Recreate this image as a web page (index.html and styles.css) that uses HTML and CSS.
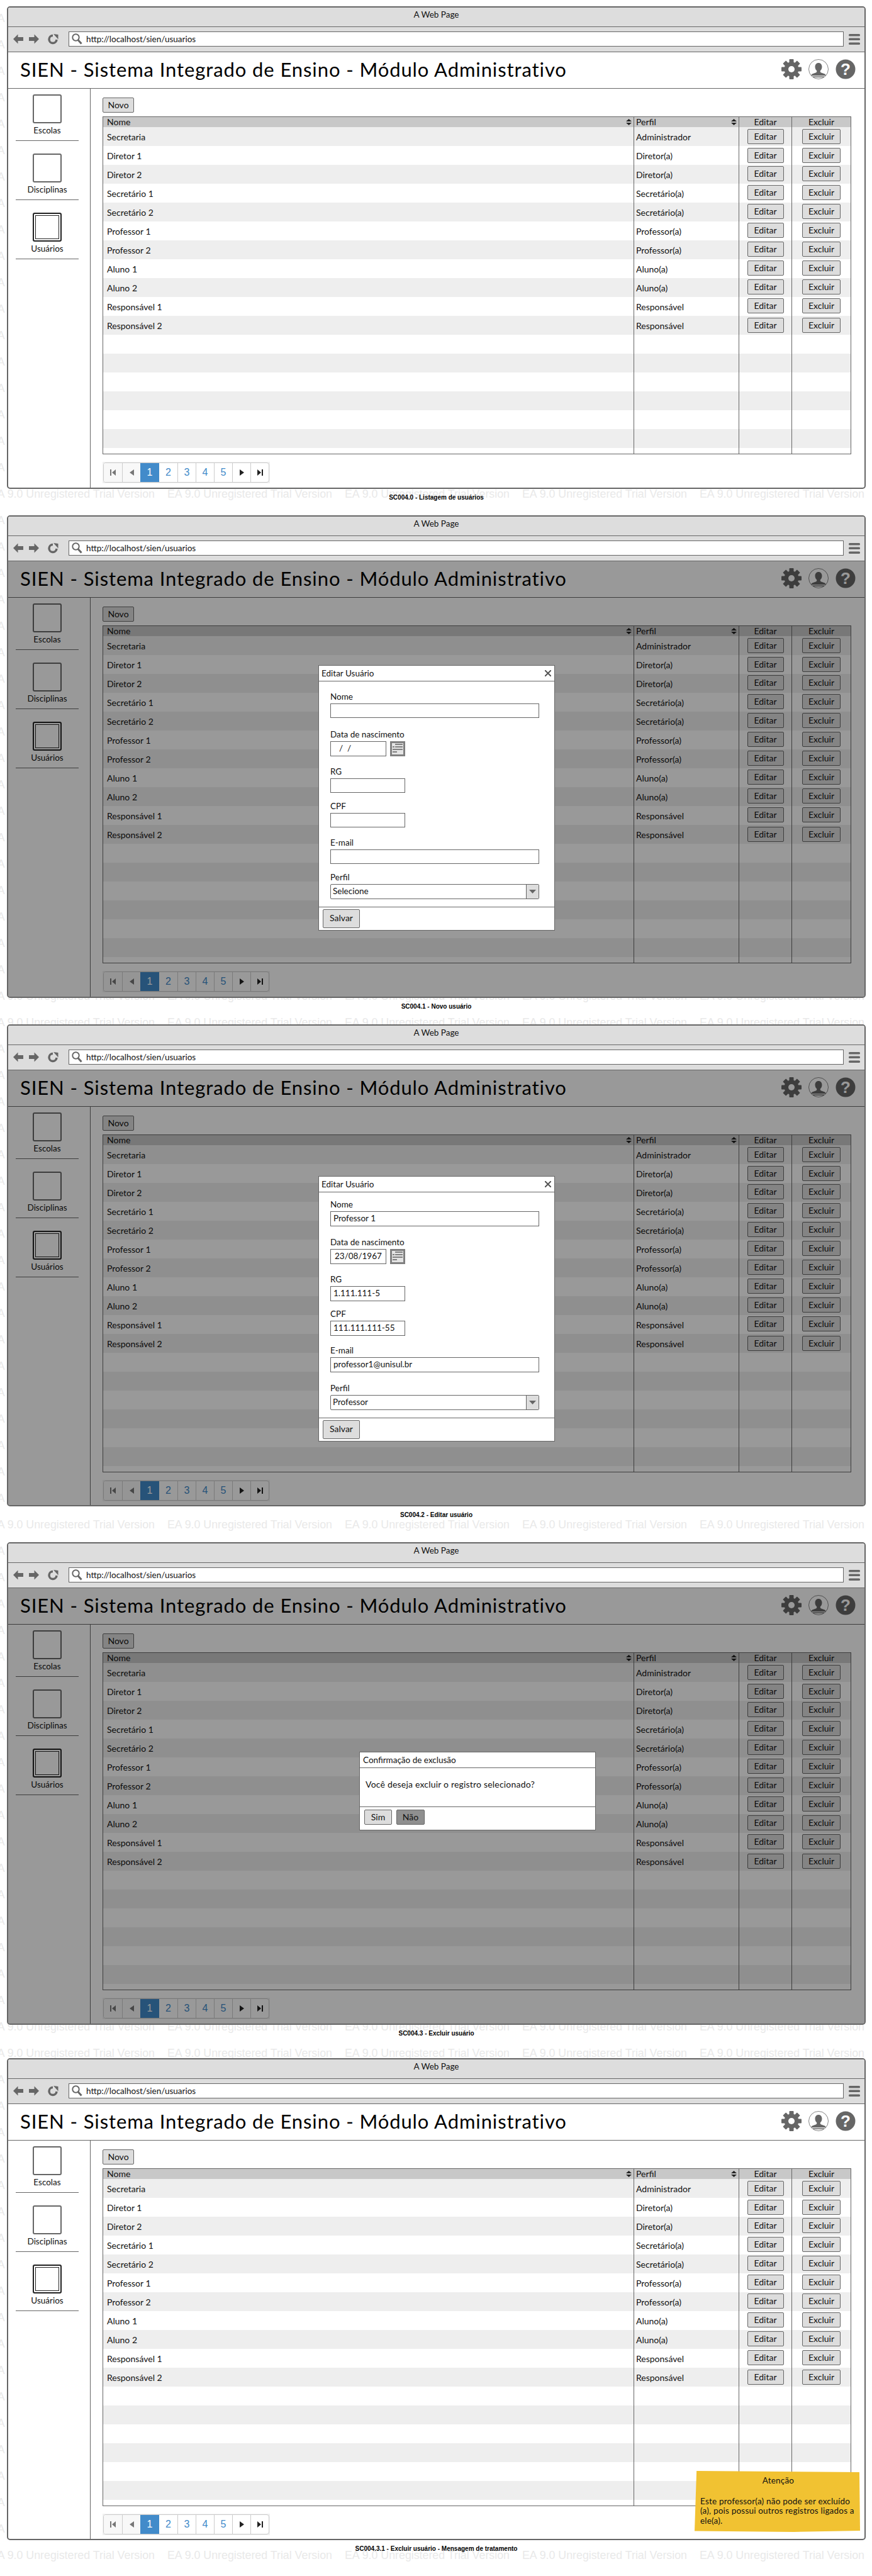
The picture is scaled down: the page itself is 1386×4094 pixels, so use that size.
FILE: index.html
```html
<!DOCTYPE html>
<html lang="pt-BR">
<head>
  <meta charset="UTF-8">
  <title>SIEN - Usuários</title>
  <link rel="stylesheet" href="styles.css">
</head>
<body>
  <div id="marca-dagua" class="marca-dagua"></div>
  <div id="telas" class="telas"></div>
  <script src="script.js"></script>
</body>
</html>
```

FILE: styles.css
```css
html, body {
  margin: 0;
  height: 4094px;
  overflow: hidden;
  background: #fff;
}

body {
  position: relative;
  font-family: "Lato", "Liberation Sans", sans-serif;
  font-size: 14px;
  color: #111;
}

.marca-dagua {
  position: absolute;
  top: 0;
  left: 0;
  width: 1386px;
  height: 4094px;
  overflow: hidden;
  padding-top: 19px;
  box-sizing: border-box;
  font-family: "Liberation Sans", sans-serif;
  font-size: 17.800px;
  line-height: 20px;
  color: #e9e9e9;
}

.marca-linha {
  display: flex;
  height: 42px;
  margin-left: -16px;
}

.marca-linha span {
  flex: 0 0 282px;
  white-space: nowrap;
}

.telas {
  position: relative;
  padding: 10px 0 0 11px;
}

/* janela do navegador */
.janela {
  position: relative;
  box-sizing: border-box;
  width: 1365px;
  height: 767px;
  border: 2px solid #666;
  border-radius: 5px;
  background: #fff;
  display: flex;
  flex-direction: column;
  overflow: hidden;
}

.janela.curta {
  height: 766px;
}

.legenda {
  width: 1365px;
  padding-top: 8px;
  font-family: "Liberation Sans", sans-serif;
  font-size: 10px;
  font-weight: bold;
  line-height: 12px;
  text-align: center;
  color: #000;
}

.gap-42 { height: 34px; }
.gap-57 { height: 49px; }
.gap-53 { height: 45px; }

.barra-titulo {
  box-sizing: border-box;
  height: 31px;
  background: #ddd;
  border-bottom: 1px solid #666;
  text-align: center;
  line-height: 22px;
  font-size: 13.5px;
}

.barra-url {
  box-sizing: border-box;
  height: 40px;
  background: #ddd;
  border-bottom: 1px solid #666;
  display: flex;
  align-items: center;
  padding: 0 7px 1px 8px;
}

.nav-icones {
  display: flex;
  align-items: center;
  width: 88px;
}

.nav-icones svg {
  fill: #666;
  flex: none;
}

.nav-icones .seta { margin-right: 9px; }
.nav-icones .recarregar { margin-left: 5px; }

.campo-url {
  box-sizing: border-box;
  width: 1232px;
  height: 24px;
  background: #fff;
  border: 1px solid #666;
  display: flex;
  align-items: center;
  padding-left: 4px;
  font-size: 13.5px;
}

.campo-url svg {
  margin-right: 6px;
}

.menu-icone {
  margin-left: 8px;
}

.cabecalho {
  box-sizing: border-box;
  height: 58px;
  border-bottom: 1px solid #666;
  display: flex;
  align-items: center;
  padding: 0 14px 3px 19px;
}

.cabecalho h1 {
  flex: 1;
  margin: 0;
  font-size: 31px;
  font-weight: 400;
  letter-spacing: 0.9px;
  color: #000;
}

.cabecalho svg {
  margin-left: 11px;
}

.principal {
  flex: 1;
  display: flex;
}

/* menu lateral */
.lateral {
  box-sizing: border-box;
  width: 131px;
  padding: 9px 0 0 12px;
  border-right: 1px solid #666;
}

.lateral-item {
  box-sizing: border-box;
  width: 100px;
  height: 74px;
  margin-bottom: 20px;
  border-bottom: 1px solid #666;
  text-align: center;
}

.lateral-icone {
  box-sizing: border-box;
  width: 46px;
  height: 46px;
  margin: 0 auto 2px;
  border: 2px solid #666;
  border-radius: 3px;
}

.lateral-item.ativo .lateral-icone {
  border-color: #222;
  box-shadow: inset 0 0 0 2px #fff, inset 0 0 0 3px #222;
}

.lateral-item span {
  line-height: 18px;
  font-size: 13.5px;
}

.conteudo {
  padding: 14px 0 0 19px;
}

.btn {
  box-sizing: border-box;
  display: inline-block;
  height: 24px;
  line-height: 21px;
  background: #ddd;
  border: 1px solid #666;
  border-radius: 2px;
  text-align: center;
  font-size: 14px;
}

.btn-novo {
  display: block;
  width: 50px;
  margin-bottom: 6px;
}

/* tabela */
.tabela {
  box-sizing: border-box;
  width: 1190px;
  table-layout: fixed;
  border-collapse: separate;
  border-spacing: 0;
  border: 1px solid #666;
}

.tabela th, .tabela td {
  padding: 0;
  font-weight: 400;
  text-align: left;
  overflow: hidden;
}

.tabela th + th, .tabela td + td {
  border-left: 1px solid #666;
}

.tabela th {
  height: 16px;
  line-height: 16px;
  background: #c8c8c8;
}

.tabela td {
  height: 30px;
}

.tabela tr.par td {
  background: #eee;
}

.tabela tr.resto td {
  height: 9px;
  background: #fff;
}

.col-nome { width: 843px; }
.col-perfil { width: 167px; }
.col-editar { width: 84px; }

.tabela .nome { padding-left: 6px; }
.tabela .perfil { padding-left: 3px; }

.tabela .centro {
  text-align: center;
}

.tabela td.centro {
  vertical-align: top;
  padding-top: 3px;
  box-sizing: border-box;
}

.tabela tr:nth-child(n+3):nth-child(-n+10) td.centro {
  padding-top: 2px;
}

.ordena {
  float: right;
  margin: 3px 3px 0 0;
  fill: #222;
}

.btn-editar { width: 58px; }
.btn-excluir { width: 61px; }

/* paginacao */
.paginacao {
  display: inline-flex;
  margin: 12px 0 0 0;
  padding: 1px;
  background: #f0f0f0;
  font-family: "Liberation Sans", sans-serif;
}

.paginacao-lista {
  display: flex;
  height: 30px;
  background: #fff;
  border: 1px solid #ccc;
  border-radius: 4px;
  overflow: hidden;
}

.pagina {
  box-sizing: border-box;
  width: 29px;
  display: flex;
  align-items: center;
  justify-content: center;
  font-size: 16px;
  color: #428bca;
  border-left: 1px solid #ccc;
}

.pagina:first-child {
  border-left: 0;
}

.pagina.atual {
  width: 30px;
  border-left: 0;
  background: #428bca;
  color: #fff;
}

.pagina.atual + .pagina {
  border-left: 0;
}

.pagina.inativa {
  background: #f8f8f8;
  fill: #777;
}

.pagina svg {
  fill: inherit;
}

.pagina.seta-ativa {
  fill: #222;
}

/* fundo escuro dos dialogos */
.escurecer {
  position: absolute;
  top: 71px;
  left: 0;
  right: 0;
  bottom: 0;
  background: rgba(0, 0, 0, 0.4);
}

.dialogo {
  position: absolute;
  box-sizing: border-box;
  width: 376px;
  background: #fff;
  border: 1px solid #666;
}

.dialogo-novo { top: 165px; left: 493px; height: 422px; }
.dialogo-editar { top: 168px; left: 493px; height: 422px; }
.dialogo-excluir { top: 260px; left: 558px; height: 125px; }

.dialogo-topo {
  box-sizing: border-box;
  height: 25px;
  padding: 0 4px;
  border-bottom: 1px solid #666;
  display: flex;
  align-items: center;
  justify-content: space-between;
  font-size: 13.5px;
}

.fechar {
  stroke: #555;
  stroke-width: 2;
  margin-right: 1px;
}

.form {
  padding: 0 24px 0 18px;
}

.campo label {
  display: block;
  height: 18px;
  line-height: 18px;
  margin-bottom: 2px;
  font-size: 13.5px;
}

.g10 { padding-top: 10px; }
.g11 { padding-top: 11px; }
.g12 { padding-top: 12px; }
.g14 { padding-top: 14px; }
.g15 { padding-top: 15px; }
.g16 { padding-top: 16px; }
.g17 { padding-top: 17px; }

.entrada-linha {
  display: flex;
  align-items: center;
}

.entrada {
  box-sizing: border-box;
  height: 24px;
  line-height: 21px;
  padding-left: 4px;
  border: 1px solid #666;
  background: #fff;
  font-size: 13.5px;
  white-space: pre;
}

.entrada.baixa { height: 23px; }
.entrada.larga { width: 332px; }
.entrada.media { width: 119px; }
.entrada.data { width: 89px; padding-left: 6px; }

.calendario {
  margin-left: 6px;
}

.selecao {
  box-sizing: border-box;
  width: 332px;
  height: 24px;
  border: 1px solid #666;
  border-radius: 2px;
  display: flex;
  justify-content: space-between;
  line-height: 21px;
  padding-left: 3px;
  font-size: 13.5px;
}

.selecao-seta {
  width: 19px;
  background: #ddd;
  border-left: 1px solid #666;
  display: flex;
  align-items: center;
  justify-content: center;
  fill: #666;
}

.dialogo-rodape {
  position: absolute;
  left: 0;
  right: 0;
  bottom: 0;
  border-top: 1px solid #666;
  display: flex;
}

.dialogo-novo .dialogo-rodape,
.dialogo-editar .dialogo-rodape {
  padding: 3px 6px 3px;
}

.btn-salvar {
  width: 59px;
  height: 30px;
  line-height: 26px;
}

.dialogo-excluir .dialogo-topo {
  padding-left: 5px;
}

.mensagem {
  padding: 17px 0 0 9px;
  line-height: 18px;
  letter-spacing: 0.2px;
}

.dialogo-excluir .dialogo-rodape {
  padding: 4px 7px 8px;
  gap: 7px;
}

.btn-sim { width: 44px; }
.btn-nao { width: 45px; background: #8f8f8f; }

/* aviso amarelo */
.aviso {
  position: absolute;
  top: 654px;
  left: 1091px;
  box-sizing: border-box;
  width: 263px;
  height: 97px;
  padding: 8px 6px 0 9px;
  background: #f1c232;
  clip-path: polygon(1.2% 0, 99.6% 2%, 100% 98%, 60% 100%, 0 98.5%);
  font-size: 13.5px;
  line-height: 15.500px;
  letter-spacing: 0.2px;
  color: #111;
}

.aviso-titulo {
  text-align: center;
  margin-bottom: 17px;
}
```

FILE: script.js
```js
// Marca d'agua do EA: atras das janelas so aparece a sobra da margem esquerda
const faixasJanelas = [[10, 777], [819, 1586], [1628, 2394], [2451, 3218], [3271, 4037]];
const marca = document.getElementById("marca-dagua");
let htmlMarca = "";
for (let i = 0; i < 97; i++) {
  const centro = 29 + i * 42;
  const coberta = faixasJanelas.some(f => centro - 8 > f[0] && centro + 8 < f[1]);
  htmlMarca += '<div class="marca-linha">';
  if (coberta) {
    htmlMarca += "<span>EA</span>";
  } else {
    for (let j = 0; j < 5; j++) {
      htmlMarca += "<span>EA 9.0 Unregistered Trial Version</span>";
    }
  }
  htmlMarca += "</div>";
}
marca.innerHTML = htmlMarca;

const usuarios = [
  ["Secretaria", "Administrador"],
  ["Diretor 1", "Diretor(a)"],
  ["Diretor 2", "Diretor(a)"],
  ["Secretário 1", "Secretário(a)"],
  ["Secretário 2", "Secretário(a)"],
  ["Professor 1", "Professor(a)"],
  ["Professor 2", "Professor(a)"],
  ["Aluno 1", "Aluno(a)"],
  ["Aluno 2", "Aluno(a)"],
  ["Responsável 1", "Responsável"],
  ["Responsável 2", "Responsável"]
];

const iconeVoltar = '<svg class="seta" width="16" height="16" viewBox="0 0 16 16"><path d="M0 8 7.500 0.500V5H16V11H7.500V15.500Z"/></svg>';
const iconeAvancar = '<svg class="seta" width="16" height="16" viewBox="0 0 16 16"><path d="M16 8 8.500 0.500V5H0V11H8.500V15.500Z"/></svg>';
const iconeRecarregar = '<svg class="recarregar" width="17" height="17" viewBox="0 0 17 17"><path d="M8 2.500A6 6 0 1 0 14 9" fill="none" stroke="#666" stroke-width="3.500"/><path d="M9 0 16.500 1V8.500Z"/></svg>';
const iconeBusca = '<svg width="17" height="18" viewBox="0 0 17 18"><circle cx="6.500" cy="6.500" r="5.200" fill="none" stroke="#666" stroke-width="2"/><path d="M10 10.500 15.500 16.500" stroke="#666" stroke-width="3"/></svg>';
const iconeMenu = '<svg class="menu-icone" width="18" height="17" viewBox="0 0 18 17"><rect width="18" height="3.500" rx="1.500" fill="#666"/><rect y="6.500" width="18" height="3.500" rx="1.500" fill="#666"/><rect y="13.500" width="18" height="3.500" rx="1.500" fill="#666"/></svg>';

let dentes = "";
for (let a = 0; a < 360; a += 45) {
  dentes += `<rect x="12.500" y="0" width="7" height="7" rx="1" transform="rotate(${a} 16 16)"/>`;
}
const iconeEngrenagem = `<svg width="32" height="32" viewBox="0 0 32 32" fill="#666">${dentes}<circle cx="16" cy="16" r="11.500"/><circle cx="16" cy="16" r="5" fill="#fff"/></svg>`;
const iconeUsuario = '<svg width="32" height="32" viewBox="0 0 32 32" fill="#666"><circle cx="16" cy="16" r="15.500" fill="#fff" stroke="#666" stroke-width="0.800"/><path d="M16 6c3.400 0 5.500 2.600 5.500 6.200 0 2.600-1 4.800-2.700 6v2c0 .8 2.200 1.500 5 2.500 2.200.8 3.700 1.600 4 3.500H4.200c.3-1.900 1.800-2.700 4-3.500 2.800-1 5-1.700 5-2.500v-2c-1.700-1.200-2.700-3.400-2.700-6C10.500 8.600 12.600 6 16 6z"/><rect x="7" y="27.500" width="18" height="1.500"/></svg>';
const iconeAjuda = '<svg width="32" height="32" viewBox="0 0 32 32"><circle cx="16" cy="16" r="15.500" fill="#666"/><text x="16" y="25" text-anchor="middle" font-family="Liberation Sans" font-weight="bold" font-size="26" fill="#fff">?</text></svg>';
const iconeOrdena = '<svg class="ordena" width="9" height="10" viewBox="0 0 9 10"><path d="M4.500 0 9 4H0ZM0 6H9L4.500 10Z"/></svg>';

function celulaPagina(classe, conteudo) {
  return `<div class="pagina ${classe}">${conteudo}</div>`;
}

function paginacao() {
  const primeira = '<svg width="9" height="10" viewBox="0 0 9 10"><rect width="2" height="10"/><path d="M9 0V10L3 5Z"/></svg>';
  const anterior = '<svg width="7" height="10" viewBox="0 0 7 10"><path d="M7 0V10L0 5Z"/></svg>';
  const proxima = '<svg width="7" height="10" viewBox="0 0 7 10"><path d="M0 0V10L7 5Z"/></svg>';
  const ultima = '<svg width="9" height="10" viewBox="0 0 9 10"><rect x="7" width="2" height="10"/><path d="M0 0V10L6 5Z"/></svg>';
  return '<div class="paginacao"><div class="paginacao-lista">' +
    celulaPagina("inativa", primeira) +
    celulaPagina("inativa", anterior) +
    celulaPagina("atual", "1") +
    [2, 3, 4, 5].map(n => celulaPagina("", n)).join("") +
    celulaPagina("seta-ativa", proxima) +
    celulaPagina("seta-ativa", ultima) +
    "</div></div>";
}

function tabela() {
  let linhas = "";
  for (let i = 0; i < 17; i++) {
    const u = usuarios[i];
    const classe = i % 2 === 0 ? "par" : "";
    if (u) {
      linhas += `<tr class="${classe}"><td class="nome">${u[0]}</td><td class="perfil">${u[1]}</td>` +
        '<td class="centro"><span class="btn btn-editar">Editar</span></td>' +
        '<td class="centro"><span class="btn btn-excluir">Excluir</span></td></tr>';
    } else {
      linhas += `<tr class="${classe}"><td></td><td></td><td></td><td></td></tr>`;
    }
  }
  return `<table class="tabela">
    <colgroup><col class="col-nome"><col class="col-perfil"><col class="col-editar"><col></colgroup>
    <thead><tr>
      <th class="nome">${iconeOrdena}Nome</th>
      <th class="perfil">${iconeOrdena}Perfil</th>
      <th class="centro">Editar</th>
      <th class="centro">Excluir</th>
    </tr></thead>
    <tbody>${linhas}<tr class="resto"><td></td><td></td><td></td><td></td></tr></tbody>
  </table>`;
}

function campo(rotulo, classeGap, conteudo) {
  return `<div class="campo ${classeGap}"><label>${rotulo}</label>${conteudo}</div>`;
}

function entrada(classes, valor) {
  return `<div class="entrada ${classes}">${valor}</div>`;
}

function dialogoUsuario(classe, v, g, baixa) {
  const calendario = '<svg class="calendario" width="24" height="24" viewBox="0 0 24 24"><rect width="24" height="24" fill="#808080"/><rect x="3" y="3" width="18" height="18" fill="#e4e4e4"/><path d="M8 4h12v2H8zM8 8h12v2H8zM4 8h3v2H4zM4 12h16v2H4zM4 16h7v2H4z" fill="#808080"/></svg>';
  return `<div class="dialogo ${classe}">
    <div class="dialogo-topo"><span>Editar Usuário</span>
      <svg class="fechar" width="10" height="10" viewBox="0 0 10 10"><path d="M0 0 10 10M10 0 0 10"/></svg>
    </div>
    <div class="form">
      ${campo("Nome", g[0], entrada("larga " + baixa, v.nome))}
      ${campo("Data de nascimento", g[1], `<div class="entrada-linha">${entrada("data", v.data)}${calendario}</div>`)}
      ${campo("RG", g[2], entrada("media " + baixa, v.rg))}
      ${campo("CPF", g[3], entrada("media " + baixa, v.cpf))}
      ${campo("E-mail", g[4], entrada("larga " + baixa, v.email))}
      ${campo("Perfil", g[5], `<div class="selecao"><span>${v.perfil}</span><span class="selecao-seta"><svg width="11" height="6" viewBox="0 0 11 6"><path d="M0 0H11L5.500 6Z"/></svg></span></div>`)}
    </div>
    <div class="dialogo-rodape"><span class="btn btn-salvar">Salvar</span></div>
  </div>`;
}

function dialogoExcluir() {
  return `<div class="dialogo dialogo-excluir">
    <div class="dialogo-topo"><span>Confirmação de exclusão</span></div>
    <div class="mensagem">Você deseja excluir o registro selecionado?</div>
    <div class="dialogo-rodape"><span class="btn btn-sim">Sim</span><span class="btn btn-nao">Não</span></div>
  </div>`;
}

function janela(classe, sobre) {
  const lateral = [["Escolas", ""], ["Disciplinas", ""], ["Usuários", "ativo"]]
    .map(m => `<div class="lateral-item ${m[1]}"><div class="lateral-icone"></div><span>${m[0]}</span></div>`)
    .join("");
  return `<div class="janela ${classe}">
    <div class="barra-titulo">A Web Page</div>
    <div class="barra-url">
      <div class="nav-icones">${iconeVoltar}${iconeAvancar}${iconeRecarregar}</div>
      <div class="campo-url">${iconeBusca}<span>http://localhost/sien/usuarios</span></div>
      ${iconeMenu}
    </div>
    <div class="cabecalho">
      <h1>SIEN - Sistema Integrado de Ensino - Módulo Administrativo</h1>
      ${iconeEngrenagem}${iconeUsuario}${iconeAjuda}
    </div>
    <div class="principal">
      <div class="lateral">${lateral}</div>
      <div class="conteudo">
        <span class="btn btn-novo">Novo</span>
        ${tabela()}
        ${paginacao()}
      </div>
    </div>
    ${sobre}
  </div>`;
}

const vazio = { nome: "", data: "  /  /", rg: "", cpf: "", email: "", perfil: "Selecione" };
const professor = { nome: "Professor 1", data: "23/08/1967", rg: "1.111.111-5", cpf: "111.111.111-55", email: "professor1@unisul.br", perfil: "Professor" };

const aviso = `<div class="aviso">
  <div class="aviso-titulo">Atenção</div>
  Este professor(a) não pode ser excluído<br>(a), pois possui outros registros ligados a<br>ele(a).
</div>`;

const telas = [
  { classe: "", sobre: "", legenda: "SC004.0 - Listagem de usuários", gap: "gap-42" },
  {
    classe: "",
    sobre: `<div class="escurecer">${dialogoUsuario("dialogo-novo", vazio, ["g15", "g17", "g15", "g12", "g15", "g12"], "baixa")}</div>`,
    legenda: "SC004.1 - Novo usuário",
    gap: "gap-42"
  },
  {
    classe: "curta",
    sobre: `<div class="escurecer">${dialogoUsuario("dialogo-editar", professor, ["g10", "g16", "g15", "g11", "g14", "g16"], "")}</div>`,
    legenda: "SC004.2 - Editar usuário",
    gap: "gap-57"
  },
  {
    classe: "",
    sobre: `<div class="escurecer">${dialogoExcluir()}</div>`,
    legenda: "SC004.3 - Excluir usuário",
    gap: "gap-53"
  },
  { classe: "curta", sobre: aviso, legenda: "SC004.3.1 - Excluir usuário - Mensagem de tratamento", gap: "gap-42" }
];

document.getElementById("telas").innerHTML = telas
  .map(t => janela(t.classe, t.sobre) + `<div class="legenda ${t.gap}">${t.legenda}</div>`)
  .join("");
```
